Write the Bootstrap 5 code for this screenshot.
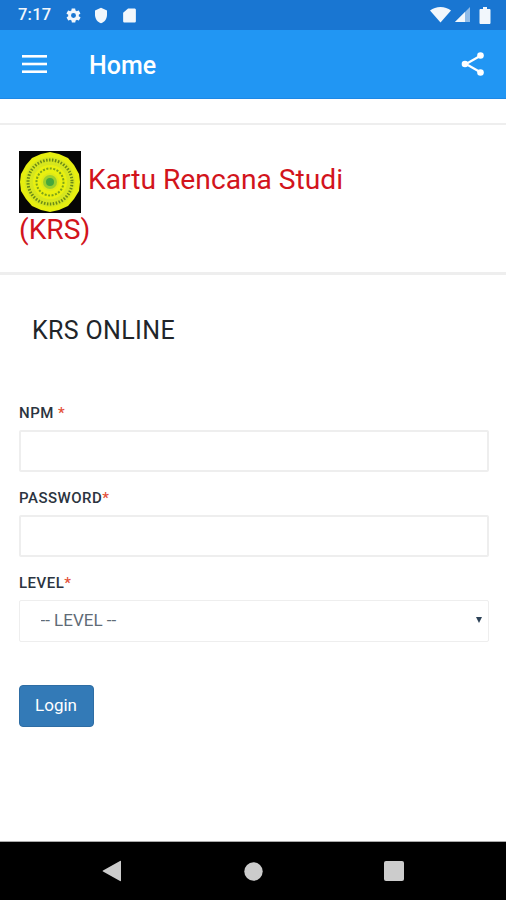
<!DOCTYPE html>
<html lang="id">
<head>
<meta charset="utf-8">
<title>Home</title>
<link href="https://cdn.jsdelivr.net/npm/bootstrap@5.3.0/dist/css/bootstrap.min.css" rel="stylesheet">
<style>
html,body{height:900px;overflow:hidden}
body{font-family:Roboto,"Liberation Sans",sans-serif;background:#fff}
.shell{height:900px}
.status-strip{height:30px;background:#1976d2;color:#f2f7fc;padding:0 15px 0 18px;font-size:16.5px;font-weight:500}
.status-strip .clock{width:35px;margin-right:12px;letter-spacing:.2px}
.status-strip .gear{margin-right:11px}
.status-strip .shield{margin-right:12px}
.app-strip{height:69px;background:#2196f3;color:#fff;padding:0 21px 0 22px;border-bottom:1px solid #1e88e5}
.app-strip .page-name{font-size:25px;font-weight:500;margin-left:42px;padding-top:4px}
.rule-a{height:2px;background:#eeeeee;margin-top:24px}
.title-block{padding:26px 19px 0;height:147px}
.title-text{width:340px;color:#d2141c;font-size:28.2px;line-height:33px;margin:0;font-weight:400}
.title-text svg{vertical-align:middle}
.rule-b{height:3px;background:#eeeeee}
.form-title{font-size:25px;line-height:30px;color:#212529;margin:41px 0 0 32px;font-weight:400;letter-spacing:.35px}
.krs-form{padding:0 17px 0 18.5px;margin-top:58px}
.field-label{font-size:15px;font-weight:500;color:#2b3440;line-height:18px;margin:0 0 8px .5px;letter-spacing:.5px;display:block}
.req{color:#e4513a}
.field-box.form-control,.field-box.form-select{height:42px;border:2px solid #eeeeee;border-radius:2px;margin-bottom:17px;background-color:#fff;box-shadow:none}
.field-box.form-select{border-width:1px;border-color:#eeeeee;font-size:17px;color:#5f6b76;padding:0 0 0 21px;background-image:none;-webkit-appearance:none;appearance:none}
.select-wrap{position:relative}
.caret-mark{position:absolute;right:7px;top:17px;width:0;height:0;border-left:3.5px solid transparent;border-right:3.5px solid transparent;border-top:6px solid #2d4257}
.login-btn.btn{background:#337ab7;border:1px solid #2e6da4;color:#fff;width:75px;height:42px;font-size:17px;padding:0;border-radius:4px;margin-top:26px;--bs-btn-hover-bg:#337ab7}
.nav-strip{height:59px;background:#000;border-top:1px solid #aaa;margin-top:auto;color:#ccc;padding-left:102px;padding-right:102px}
</style>
</head>
<body>
<div class="shell d-flex flex-column">
  <div class="status-strip d-flex align-items-center">
    <span class="clock">7:17</span>
    <svg width="17" height="17" viewBox="0 0 24 24" class="gear" fill="#f2f7fc"><path d="M19.400 13c.1-.3.1-.7.1-1s0-.7-.1-1l2.100-1.600c.2-.2.2-.4.1-.6l-2-3.500c-.1-.2-.4-.3-.6-.2l-2.500 1c-.5-.4-1.100-.7-1.700-1l-.4-2.600c0-.2-.2-.4-.5-.4h-4c-.2 0-.4.200-.5.400l-.4 2.600c-.6.300-1.200.600-1.700 1l-2.500-1c-.2-.1-.5 0-.6.200l-2 3.500c-.1.200-.1.500.100.600L4.600 11c0 .3-.1.700-.1 1s0 .7.1 1l-2.100 1.600c-.2.200-.2.400-.1.600l2 3.500c.1.200.4.300.6.200l2.500-1c.5.400 1.100.700 1.700 1l.4 2.600c0 .2.200.4.500.4h4c.200 0 .4-.2.500-.4l.4-2.600c.6-.3 1.200-.6 1.700-1l2.500 1c.2.100.5 0 .6-.2l2-3.500c.1-.2.100-.4-.1-.6L19.400 13zM12 15.500a3.500 3.500 0 1 1 0-7 3.500 3.500 0 0 1 0 7z"/></svg>
    <svg width="16" height="17" viewBox="0 0 24 24" class="shield" preserveAspectRatio="none" fill="#f2f7fc"><path d="M12 1 3 5v6c0 5.600 3.800 10.700 9 12 5.200-1.300 9-6.400 9-12V5l-9-4z"/></svg>
    <svg width="17" height="17" viewBox="0 0 24 24" fill="#f2f7fc"><path d="M18 2h-8L3 8v12c0 1.100.9 2 2 2h14c1.100 0 2-.9 2-2V4c0-1.100-.9-2-2-2z"/></svg>
    <span class="ms-auto d-flex align-items-center">
      <svg width="21" height="16" viewBox="0 0 21 16" fill="#f2f7fc"><path d="M0 3.500C3 1.200 6.500 0 10.500 0S18 1.200 21 3.500L10.500 15.500z"/></svg>
      <svg width="16" height="16" viewBox="0 0 16 16" class="ms-1"><path d="M0 15 15 0v15z" fill="#8fbbe8"/><path d="M0 15 10 5v10z" fill="#f2f7fc"/></svg>
      <svg width="12" height="17" viewBox="0 0 12 17" class="ms-2" fill="#f2f7fc"><path d="M4 0h4v2h2.500c.5 0 1 .5 1 1v13c0 .5-.5 1-1 1h-9c-.5 0-1-.5-1-1V3c0-.5.500-1 1-1H4z"/></svg>
    </span>
  </div>
  <div class="app-strip d-flex align-items-center">
    <svg width="25" height="18" viewBox="0 0 25 18" fill="#fff"><rect y="0" width="25" height="2.600"/><rect y="7.700" width="25" height="2.600"/><rect y="15.400" width="25" height="2.600"/></svg>
    <span class="page-name">Home</span>
    <svg class="ms-auto" width="24" height="26" viewBox="0 0 24 26" fill="#fff" stroke="#fff"><path d="M19 5 5 13l14 8" fill="none" stroke-width="2.200"/><circle cx="19.500" cy="4.500" r="3.300" stroke="none"/><circle cx="4" cy="13" r="3.300" stroke="none"/><circle cx="19.500" cy="21.500" r="3.300" stroke="none"/></svg>
  </div>
  <div class="rule-a"></div>
  <div class="title-block">
    <h1 class="title-text"><svg width="62" height="62" viewBox="0 0 62 62"><rect width="62" height="62" fill="#050505"/><polygon points="31,1 40,3 49,7 55,14 60,23 61,31 60,40 55,48 49,55 40,59 31,61 22,59 13,55 7,48 2,40 1,31 2,23 7,14 13,7 22,3" fill="#e6ee10"/><circle cx="31" cy="31" r="25" fill="#d6e61e"/><circle cx="31" cy="31" r="22" fill="none" stroke="#6b8a16" stroke-width="3" stroke-dasharray="1.500 1.500"/><circle cx="31" cy="31" r="17" fill="#e9f010"/><circle cx="31" cy="31" r="13.500" fill="none" stroke="#7ca31a" stroke-width="2" stroke-dasharray="2 1.500"/><circle cx="31" cy="31" r="9" fill="#dfe81a"/><circle cx="31" cy="31" r="7" fill="#9ccf2c"/><circle cx="31" cy="31" r="4" fill="#46a73c"/></svg> Kartu Rencana Studi (KRS)</h1>
  </div>
  <div class="rule-b"></div>
  <h2 class="form-title">KRS ONLINE</h2>
  <form class="krs-form">
    <label class="field-label" for="npm">NPM <span class="req">*</span></label>
    <input class="form-control field-box" id="npm" type="text">
    <label class="field-label" for="pw">PASSWORD<span class="req">*</span></label>
    <input class="form-control field-box" id="pw" type="password">
    <label class="field-label" for="lv">LEVEL<span class="req">*</span></label>
    <div class="select-wrap">
      <select class="form-select field-box" id="lv"><option>-- LEVEL --</option></select>
      <span class="caret-mark"></span>
    </div>
    <button type="button" class="btn login-btn">Login</button>
  </form>
  <div class="nav-strip d-flex align-items-center justify-content-between">
    <svg width="20" height="22" viewBox="0 0 20 22" fill="#ccc"><path d="M19 1.500v19q0 1-1 .500L1 11.500q-1-.5 0-1L18 1q1-.5 1 .500z"/></svg>
    <svg width="19" height="19" viewBox="0 0 19 19" fill="#ccc"><circle cx="9.500" cy="9.500" r="9.200"/></svg>
    <svg width="20" height="20" viewBox="0 0 20 20" fill="#ccc"><rect width="20" height="20" rx="2"/></svg>
  </div>
</div>
<script src="https://cdn.jsdelivr.net/npm/bootstrap@5.3.0/dist/js/bootstrap.bundle.min.js"></script>
</body>
</html>
